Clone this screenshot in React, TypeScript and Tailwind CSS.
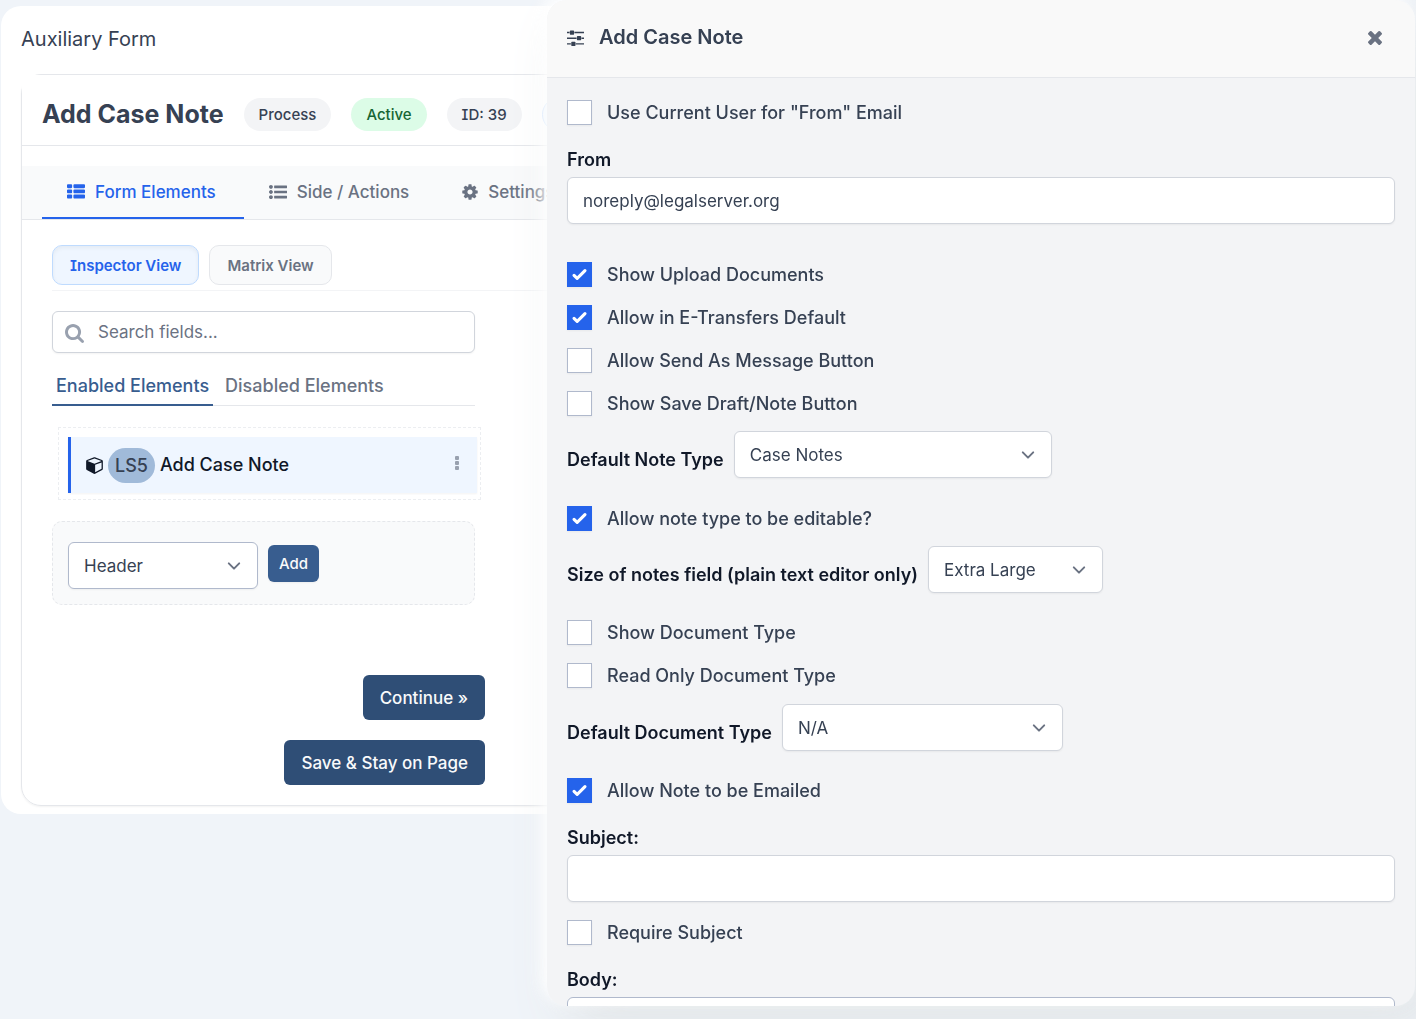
import { useState } from "react"
import type { ReactNode } from "react"

const icons = {
  thList: {
    box: "0 0 1792 1792",
    d: "M512 1248v192q0 40-28 68t-68 28h-320q-40 0-68-28t-28-68v-192q0-40 28-68t68-28h320q40 0 68 28t28 68zM512 736v192q0 40-28 68t-68 28h-320q-40 0-68-28t-28-68v-192q0-40 28-68t68-28h320q40 0 68 28t28 68zM1792 1248v192q0 40-28 68t-68 28h-960q-40 0-68-28t-28-68v-192q0-40 28-68t68-28h960q40 0 68 28t28 68zM512 224v192q0 40-28 68t-68 28h-320q-40 0-68-28t-28-68v-192q0-40 28-68t68-28h320q40 0 68 28t28 68zM1792 736v192q0 40-28 68t-68 28h-960q-40 0-68-28t-28-68v-192q0-40 28-68t68-28h960q40 0 68 28t28 68zM1792 224v192q0 40-28 68t-68 28h-960q-40 0-68-28t-28-68v-192q0-40 28-68t68-28h960q40 0 68 28t28 68z",
  },
  listUl: {
    box: "0 0 1792 1792",
    d: "M384 1408q0 80-56 136t-136 56-136-56-56-136 56-136 136-56 136 56 56 136zM384 896q0 80-56 136t-136 56-136-56-56-136 56-136 136-56 136 56 56 136zM1792 1312v192q0 13-9.500 22.500t-22.500 9.500h-1216q-13 0-22.500-9.500t-9.500-22.500v-192q0-13 9.500-22.500t22.500-9.500h1216q13 0 22.500 9.500t9.500 22.500zM384 384q0 80-56 136t-136 56-136-56-56-136 56-136 136-56 136 56 56 136zM1792 800v192q0 13-9.500 22.500t-22.500 9.500h-1216q-13 0-22.500-9.500t-9.500-22.500v-192q0-13 9.500-22.500t22.500-9.500h1216q13 0 22.500 9.500t9.500 22.500zM1792 288v192q0 13-9.500 22.500t-22.500 9.500h-1216q-13 0-22.500-9.500t-9.500-22.500v-192q0-13 9.500-22.500t22.500-9.500h1216q13 0 22.500 9.500t9.500 22.500z",
  },
  cog: {
    box: "128 0 1536 1792",
    d: "M1152 896q0-106-75-181t-181-75-181 75-75 181 75 181 181 75 181-75 75-181zm512-109v222q0 12-8 23t-20 13l-185 28q-19 54-39 91 35 50 107 138 10 12 10 25t-9 23q-27 37-99 108t-94 71q-12 0-26-9l-138-108q-44 23-91 38-16 136-29 186-7 28-36 28h-222q-14 0-24.500-8.500t-11.500-21.500l-28-184q-49-16-90-37l-141 107q-10 9-25 9-14 0-25-11-126-114-165-168-7-10-7-23 0-12 8-23 15-21 51-66.500t54-70.500q-27-50-41-99l-183-27q-13-2-21-12.500t-8-23.500v-222q0-12 8-23t19-13l186-28q14-46 39-92-40-57-107-138-10-12-10-24 0-10 9-23 26-36 98.500-107.500t94.500-71.500q13 0 26 10l138 107q44-23 91-38 16-136 29-186 7-28 36-28h222q14 0 24.500 8.500t11.500 21.500l28 184q49 16 90 37l142-107q9-9 24-9 13 0 25 10 129 119 165 170 7 8 7 22 0 12-8 23-15 21-51 66.500t-54 70.500q26 50 41 98l183 28q13 2 21 12.500t8 23.500z",
  },
  search: {
    box: "64 128 1664 1664",
    d: "M1216 832q0-185-131.500-316.500t-316.500-131.500-316.500 131.500-131.500 316.500 131.500 316.500 316.500 131.500 316.500-131.500 131.500-316.500zm512 832q0 52-38 90t-90 38q-54 0-90-38l-343-342q-179 124-399 124-143 0-273.500-55.500t-225-150-150-225-55.500-273.500 55.500-273.500 150-225 225-150 273.500-55.500 273.500 55.500 225 150 150 225 55.500 273.500q0 220-124 399l343 343q37 37 37 90z",
  },
  cube: {
    box: "0 0 1664 1792",
    d: "M896 1629l640-349v-636l-640 233v752zM832 764l698-254-698-254-698 254zM1664 512v768q0 35-18 65t-49 47l-704 384q-28 16-61 16t-61-16l-704-384q-31-17-49-47t-18-65v-768q0-40 23-73t61-47l704-256q22-8 44-8t44 8l704 256q38 14 61 47t23 73z",
  },
  sliders: {
    box: "0 128 1536 1536",
    d: "M352 1408v128h-352v-128h352zM704 1280q26 0 45 19t19 45v256q0 26-19 45t-45 19h-256q-26 0-45-19t-19-45v-256q0-26 19-45t45-19h256zM864 896v128h-864v-128h864zM224 384v128h-224v-128h224zM1536 1408v128h-736v-128h736zM576 256q26 0 45 19t19 45v256q0 26-19 45t-45 19h-256q-26 0-45-19t-19-45v-256q0-26 19-45t45-19h256zM1216 768q26 0 45 19t19 45v256q0 26-19 45t-45 19h-256q-26 0-45-19t-19-45v-256q0-26 19-45t45-19h256zM1536 896v128h-224v-128h224zM1536 384v128h-864v-128h864z",
  },
  times: {
    box: "302 366 1188 1188",
    d: "M1490 1322q0 40-28 68l-136 136q-28 28-68 28t-68-28l-294-294-294 294q-28 28-68 28t-68-28l-136-136q-28-28-28-68t28-68l294-294-294-294q-28-28-28-68t28-68l136-136q28-28 68-28t68 28l294 294 294-294q28-28 68-28t68 28l136 136q28 28 28 68t-28 68l-294 294 294 294q28 28 28 68z",
  },
}

function Icon({ name, className }: { name: keyof typeof icons; className: string }) {
  return (
    <svg className={`shrink-0 ${className}`} viewBox={icons[name].box} fill="currentColor" fillRule={name === "cube" ? "evenodd" : "nonzero"} aria-hidden="true">
      <path d={icons[name].d} />
    </svg>
  )
}

function Badge({ className, children }: { className: string; children: ReactNode }) {
  return (
    <span className={`shrink-0 whitespace-nowrap rounded-full px-[15px] py-1.5 text-[15px] leading-[21px] font-medium ${className}`}>
      {children}
    </span>
  )
}

function Select({ id, label, options, className }: { id: string; label?: string; options: string[]; className: string }) {
  return (
    <div className="relative">
      <select
        id={id}
        aria-label={label}
        className={`h-[47px] appearance-none rounded-md border bg-white pt-0.5 pl-[15px] pr-10 text-[17px] text-gray-700 shadow-xs ${className}`}
      >
        {options.map((o) => (
          <option key={o}>{o}</option>
        ))}
      </select>
      <svg className="pointer-events-none absolute top-[11px] right-[11px] size-[26px] text-gray-500" viewBox="0 0 20 20" fill="none" stroke="currentColor" strokeWidth="1.5" strokeLinecap="round" strokeLinejoin="round">
        <path d="M6 8l4 4 4-4" />
      </svg>
    </div>
  )
}

function Checkbox({ label, checked = false }: { label: string; checked?: boolean }) {
  const [on, setOn] = useState(checked)

  return (
    <label className="flex w-fit items-center gap-[15px] text-lg leading-[25px] font-medium text-gray-700">
      <span className="relative flex">
        <input
          type="checkbox"
          checked={on}
          onChange={() => setOn((v) => !v)}
          className="size-[25px] appearance-none border border-[#b0b9cc] bg-white shadow-xs checked:border-[#2563eb] checked:bg-[#2563eb]"
        />
        {on && (
          <svg className="pointer-events-none absolute inset-0 size-[25px] text-white" viewBox="0 0 16 16" fill="currentColor">
            <path d="M12.207 4.793a1 1 0 010 1.414l-5 5a1 1 0 01-1.414 0l-2-2a1 1 0 011.414-1.414L6.500 9.086l4.293-4.293a1 1 0 011.414 0z" />
          </svg>
        )}
      </span>
      {label}
    </label>
  )
}

function SelectRow({ id, label, options, className }: { id: string; label: string; options: string[]; className: string }) {
  return (
    <div className="flex items-center gap-2.5">
      <label htmlFor={id} className="mt-2.5 text-lg leading-6 font-semibold text-gray-900">
        {label}
      </label>
      <Select id={id} options={options} className={`border-gray-300 ${className}`} />
    </div>
  )
}

function TextRow({ id, label, value }: { id: string; label: string; value?: string }) {
  return (
    <div className="flex flex-col gap-[5px]">
      <label htmlFor={id} className="text-lg leading-6 font-semibold text-gray-900">
        {label}
      </label>
      <input
        id={id}
        type="text"
        defaultValue={value}
        className="h-[47px] w-full rounded-md border border-gray-300 bg-white px-[15px] text-[17px] text-gray-700 shadow-xs"
      />
    </div>
  )
}

function FormCard() {
  return (
    <main className="mx-px rounded-[20px] bg-white px-5 pb-2">
      <h1 className="pt-5 pb-[22px] text-xl leading-[26px] text-gray-700">Auxiliary Form</h1>

      <div className="rounded-[20px] border border-gray-200 pb-5 shadow-xs">
        <div className="flex h-[71px] items-center gap-5 border-b border-gray-200 bg-white px-5 pt-2">
          <h2 className="shrink-0 text-[25px] leading-8 font-bold text-gray-700">Add Case Note</h2>
          <Badge className="bg-gray-100 text-gray-700">Process</Badge>
          <Badge className="bg-[#dcfce7] text-[#166534]">Active</Badge>
          <Badge className="bg-gray-100 text-gray-700">ID: 39</Badge>
          <Badge className="border border-[#bfdbfe] bg-[#eff6ff] text-[#1d4ed8]">Form</Badge>
        </div>

        {/* Main tabs */}
        <nav className="mt-5 flex border-b border-gray-200 bg-gray-50 px-5 text-[17px] leading-[26px] font-medium text-gray-500">
          <a href="#elements" className="flex shrink-0 items-center gap-2.5 border-b-2 border-[#2563eb] pt-[13px] pr-7 pb-3 pl-[25px] text-[#2563eb]">
            <Icon name="thList" className="size-[18px]" />
            Form Elements
          </a>
          <a href="#actions" className="flex shrink-0 items-center gap-2.5 border-b-2 border-transparent pt-[13px] pr-7 pb-3 pl-[25px]">
            <Icon name="listUl" className="size-[18px]" />
            Side / Actions
          </a>
          <a href="#settings" className="flex shrink-0 items-center gap-2.5 border-b-2 border-transparent pt-[13px] pr-7 pb-3 pl-[25px]">
            <Icon name="cog" className="h-[18px] w-4" />
            Settings
          </a>
        </nav>

        <div className="px-[30px] pt-[25px]">
          <div className="flex gap-2.5 border-b border-gray-100 pb-[5px] text-[15px] font-semibold">
            <button className="h-10 rounded-[10px] border border-[#bfdbfe] bg-[#eff6ff] px-[17px] pt-0.5 text-[#2563eb] shadow-[inset_0_2px_4px_0_rgb(0_0_0/0.05)]">
              Inspector View
            </button>
            <button className="h-10 rounded-[10px] border border-gray-200 bg-gray-50 px-[17px] pt-0.5 text-gray-500">Matrix View</button>
          </div>

          <div className="w-[423px] pt-5">
            <div className="relative">
              <input
                type="search"
                aria-label="Search fields"
                placeholder="Search fields..."
                className="h-[42px] w-full rounded-md border border-gray-300 bg-white pr-4 pl-[45px] text-[17px] text-gray-700 shadow-xs placeholder:text-gray-500"
              />
              <Icon name="search" className="pointer-events-none absolute top-[13px] left-[13px] size-[19px] text-gray-400" />
            </div>

            <div className="mt-[17px] flex gap-2 border-b border-gray-200 text-lg leading-6 font-medium text-gray-500">
              <button className="-mb-px border-b-2 border-[#385d8f] px-1 pt-1 pb-1.5 text-[#385d8f]">Enabled Elements</button>
              <button className="-mb-px border-b-2 border-transparent px-1 pt-1 pb-1.5">Disabled Elements</button>
            </div>

            <ul className="mt-[21px] ml-1.5 w-full border border-dashed border-[#eceef1] pt-[9px] pr-[3px] pb-1.5 pl-[9px]">
              <li className="flex h-14 items-center gap-[5px] border-l-3 border-[#2563eb] bg-[#eff6ff] pr-[17px] pl-[15px] text-lg font-medium text-gray-900 shadow-xs">
                <Icon name="cube" className="h-[18px] w-[17px]" />
                <span className="rounded-full bg-[#a0bad9] px-[7px] leading-[35px] text-gray-700">LS5</span>
                Add Case Note
                <button aria-label="Element options" className="ml-auto pb-1 text-gray-400">
                  <svg className="h-[14px] w-[5px]" viewBox="0 0 5 14" fill="currentColor">
                    <rect width="4" height="4" x="0" rx="1" />
                    <rect width="4" height="4" y="5" rx="1" />
                    <rect width="4" height="4" y="10" rx="1" />
                  </svg>
                </button>
              </li>
            </ul>

            <div className="mt-[21px] flex items-start gap-2.5 rounded-[10px] border border-dashed border-gray-200 bg-gray-50 px-[15px] pt-5 pb-[15px]">
              <Select id="new-element" label="New element" options={["Header"]} className="w-[190px] border-[#b0b9cc]" />
              <button className="mt-[3px] h-[37px] rounded-md bg-[#385d8f] px-[11px] pt-0.5 text-[15px] font-medium text-gray-50 shadow-xs">Add</button>
            </div>

            <div className="mt-[70px] -mr-2.5 flex flex-col items-end gap-5 text-[17px] font-medium text-gray-50">
              <button className="h-[45px] rounded-md bg-[#2f4e76] px-[17px] pt-0.5">Continue »</button>
              <button className="h-[45px] rounded-md bg-[#2f4e76] px-[17px] pt-0.5">Save &amp; Stay on Page</button>
            </div>
          </div>
        </div>
      </div>
    </main>
  )
}

function Drawer() {
  return (
    <aside className="fixed top-0 right-px bottom-[13px] flex w-[61.3%] flex-col overflow-hidden rounded-[20px] bg-gray-100 shadow-[-5px_-5px_15px_#ffffff,20px_20px_60px_#dfe3e5]">
      <header className="flex h-[78px] shrink-0 items-center border-b border-gray-200 bg-[#f9f9f9] px-5 pb-0.5">
        <Icon name="sliders" className="size-[17px] text-gray-700" />
        <h2 className="ml-[15px] pb-0.5 text-xl leading-[26px] font-semibold text-gray-700">Add Case Note</h2>
        <button aria-label="Close" className="ml-auto p-[13px] text-gray-500">
          <Icon name="times" className="size-[14px]" />
        </button>
      </header>

      <form className="min-h-0 flex-1 overflow-hidden px-5 pt-[22px]">
        <Checkbox label={'Use Current User for "From" Email'} />
        <div className="mt-[23px]">
          <TextRow id="from" label="From" value="noreply@legalserver.org" />
        </div>

        <div className="mt-[38px] flex flex-col gap-[18px]">
          <Checkbox label="Show Upload Documents" checked />
          <Checkbox label="Allow in E-Transfers Default" checked />
          <Checkbox label="Allow Send As Message Button" />
          <Checkbox label="Show Save Draft/Note Button" />
        </div>

        <div className="mt-[15px] mb-7">
          <SelectRow id="note-type" label="Default Note Type" options={["Case Notes"]} className="w-[318px]" />
        </div>
        <Checkbox label="Allow note type to be editable?" checked />
        <div className="mt-[15px] mb-[27px]">
          <SelectRow id="notes-size" label="Size of notes field (plain text editor only)" options={["Extra Large"]} className="w-[175px]" />
        </div>

        <div className="flex flex-col gap-[18px]">
          <Checkbox label="Show Document Type" />
          <Checkbox label="Read Only Document Type" />
        </div>
        <div className="mt-4 mb-[27px]">
          <SelectRow id="doc-type" label="Default Document Type" options={["N/A"]} className="w-[281px]" />
        </div>

        <Checkbox label="Allow Note to be Emailed" checked />
        <div className="mt-[23px] mb-[18px]">
          <TextRow id="subject" label="Subject:" />
        </div>
        <Checkbox label="Require Subject" />
        <div className="mt-[23px] flex flex-col gap-[5px]">
          <label htmlFor="body" className="text-lg leading-6 font-semibold text-gray-900">
            Body:
          </label>
          <textarea id="body" rows={6} className="w-full resize-none rounded-md border border-[#b0b9cc] bg-white px-[15px] py-2.5 text-[17px] text-gray-700" />
        </div>
      </form>
    </aside>
  )
}

export default function App() {
  return (
    <div className="min-h-screen overflow-hidden bg-[#f0f4f9] pt-1.5 font-[Inter,sans-serif] [font-feature-settings:'cv08']">
      <FormCard />
      <Drawer />
    </div>
  )
}
